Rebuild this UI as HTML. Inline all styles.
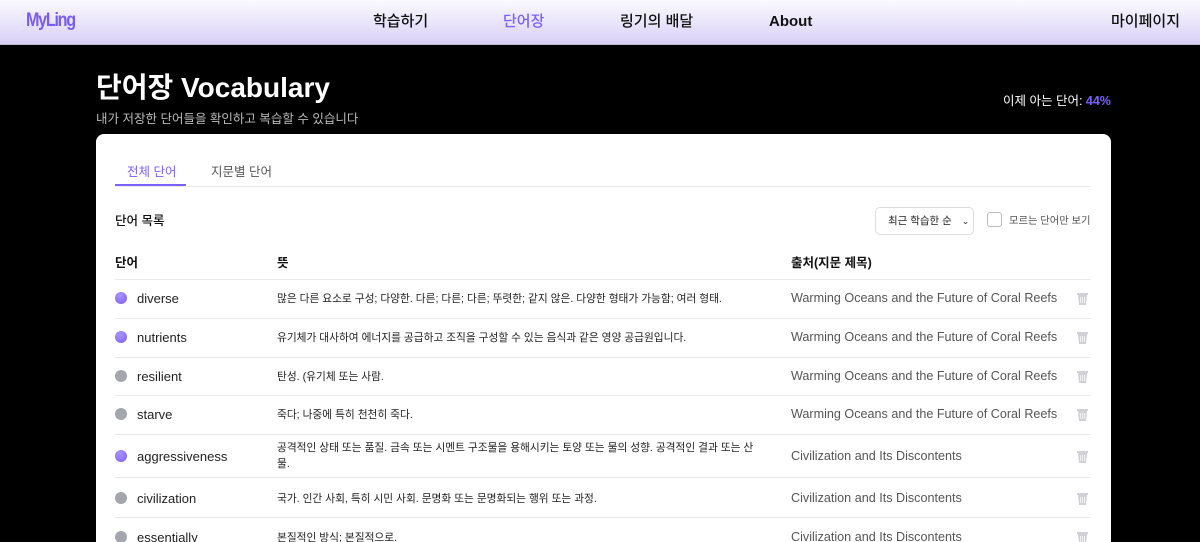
<!DOCTYPE html>
<html><head><meta charset="utf-8"><style>
*{margin:0;padding:0;box-sizing:border-box}
html,body{width:1200px;height:542px;overflow:hidden}
body{background:#000;font-family:"Liberation Sans","Noto Sans CJK KR",sans-serif;position:relative;line-height:1.2}
.nav{position:absolute;left:0;top:0;width:1200px;height:45px;background:linear-gradient(#fbfaff,#d9d1f6);border-bottom:1px solid #bdb8cc}
.nav span{position:absolute;top:13px;font-size:15px;line-height:18px;color:#111;font-weight:500}
.logo{position:absolute;left:26px;top:10px;font-size:19px;line-height:22px;color:#7a5cf0;font-weight:bold;letter-spacing:-1.5px;transform:scaleX(.85);transform-origin:left}
h1{position:absolute;left:96px;top:71px;color:#fff;font-size:28px;line-height:34px;font-weight:bold}
.sub{position:absolute;left:96px;top:112px;color:#bbb;font-size:12.5px}
.known{position:absolute;left:1003px;top:94px;color:#fff;font-size:12.5px}
.known b{color:#7b61ff}
.card{position:absolute;left:96px;top:134px;width:1015px;height:420px;background:#fff;border-radius:8px}
.abs{position:absolute}
.line{position:absolute;left:115px;width:976px;height:1px;background:#ebebeb}
.dot{position:absolute;left:115px;width:12px;height:12px;border-radius:50%}
.p{background:radial-gradient(circle at 40% 30%,#a995ff,#7c5cf0)}
.g{background:#a3a6ad}
.w{position:absolute;left:137px;font-size:13px;color:#222}
.m{position:absolute;left:277px;font-size:10.7px;color:#222;width:478px;line-height:16px}
.s{position:absolute;left:791px;font-size:12.6px;color:#555}
.t{position:absolute;left:1076px;width:13px;height:13px}
</style></head><body>
<div class="nav">
<div class="logo">MyLing</div>
<span style="left:373px">학습하기</span>
<span style="left:503px;color:#7b61ff">단어장</span>
<span style="left:620px">링기의 배달</span>
<span style="left:769px;font-weight:bold">About</span>
<span style="left:1111px">마이페이지</span>
</div>
<h1>단어장 Vocabulary</h1>
<div class="sub">내가 저장한 단어들을 확인하고 복습할 수 있습니다</div>
<div class="known">이제 아는 단어: <b>44%</b></div>
<div class="card"></div>
<div class="abs" style="left:127px;top:165px;font-size:12.5px;color:#7b61ff">전체 단어</div>
<div class="abs" style="left:211px;top:165px;font-size:12.5px;color:#555">지문별 단어</div>
<div class="abs" style="left:115px;top:184px;width:71px;height:2px;background:#7b61ff"></div>
<div class="line" style="top:186px"></div>
<div class="abs" style="left:115px;top:214px;font-size:12.5px;color:#111;font-weight:500">단어 목록</div>
<div class="abs" style="left:875px;top:207px;width:99px;height:28px;border:1px solid #ddd;border-radius:5px;font-size:10.5px;color:#222;display:flex;align-items:center;padding-left:12px;white-space:nowrap">최근 학습한 순<span style="margin-left:10px;font-size:9px">&#8964;</span></div>
<div class="abs" style="left:987px;top:212px;width:15px;height:15px;border:1px solid #bbb;border-radius:3px"></div>
<div class="abs" style="left:1009px;top:214px;font-size:10.3px;line-height:12px;color:#555;white-space:nowrap;transform:translateY(2px)">모르는 단어만 보기</div>
<div class="abs" style="left:115px;top:256px;font-size:12.5px;color:#111;font-weight:bold">단어</div>
<div class="abs" style="left:277px;top:256px;font-size:12.5px;color:#111;font-weight:bold">뜻</div>
<div class="abs" style="left:791px;top:256px;font-size:12.5px;color:#111;font-weight:bold">출처(지문 제목)</div>
<div class="line" style="top:279px"></div>

<div class="dot p" style="top:292px"></div><div class="w" style="top:291px">diverse</div><div class="m" style="top:291px">많은 다른 요소로 구성; 다양한. 다른; 다른; 다른; 뚜렷한; 같지 않은. 다양한 형태가 가능함; 여러 형태.</div><div class="s" style="top:291px">Warming Oceans and the Future of Coral Reefs</div>
<svg class="t" style="top:292px" viewBox="0 0 13 13"><path d="M1 1h11v2H1zM2 3h9l-1 10H3z" fill="#d0d0d6"/><path d="M4.5 5v6M6.5 5v6M8.5 5v6" stroke="#fff" stroke-width=".7"/></svg>
<div class="line" style="top:318px"></div>

<div class="dot p" style="top:331px"></div><div class="w" style="top:330px">nutrients</div><div class="m" style="top:330px">유기체가 대사하여 에너지를 공급하고 조직을 구성할 수 있는 음식과 같은 영양 공급원입니다.</div><div class="s" style="top:330px">Warming Oceans and the Future of Coral Reefs</div>
<svg class="t" style="top:331px" viewBox="0 0 13 13"><path d="M1 1h11v2H1zM2 3h9l-1 10H3z" fill="#d0d0d6"/><path d="M4.5 5v6M6.5 5v6M8.5 5v6" stroke="#fff" stroke-width=".7"/></svg>
<div class="line" style="top:357px"></div>

<div class="dot g" style="top:370px"></div><div class="w" style="top:369px">resilient</div><div class="m" style="top:369px">탄성. (유기체 또는 사람.</div><div class="s" style="top:369px">Warming Oceans and the Future of Coral Reefs</div>
<svg class="t" style="top:370px" viewBox="0 0 13 13"><path d="M1 1h11v2H1zM2 3h9l-1 10H3z" fill="#d0d0d6"/><path d="M4.5 5v6M6.5 5v6M8.5 5v6" stroke="#fff" stroke-width=".7"/></svg>
<div class="line" style="top:395px"></div>

<div class="dot g" style="top:408px"></div><div class="w" style="top:407px">starve</div><div class="m" style="top:407px">죽다; 나중에 특히 천천히 죽다.</div><div class="s" style="top:407px">Warming Oceans and the Future of Coral Reefs</div>
<svg class="t" style="top:408px" viewBox="0 0 13 13"><path d="M1 1h11v2H1zM2 3h9l-1 10H3z" fill="#d0d0d6"/><path d="M4.5 5v6M6.5 5v6M8.5 5v6" stroke="#fff" stroke-width=".7"/></svg>
<div class="line" style="top:434px"></div>

<div class="dot p" style="top:450px"></div><div class="w" style="top:449px">aggressiveness</div><div class="m" style="top:440px">공격적인 상태 또는 품질. 금속 또는 시멘트 구조물을 용해시키는 토양 또는 물의 성향. 공격적인 결과 또는 산<br>물.</div><div class="s" style="top:449px">Civilization and Its Discontents</div>
<svg class="t" style="top:450px" viewBox="0 0 13 13"><path d="M1 1h11v2H1zM2 3h9l-1 10H3z" fill="#d0d0d6"/><path d="M4.5 5v6M6.5 5v6M8.5 5v6" stroke="#fff" stroke-width=".7"/></svg>
<div class="line" style="top:477px"></div>

<div class="dot g" style="top:492px"></div><div class="w" style="top:491px">civilization</div><div class="m" style="top:491px">국가. 인간 사회, 특히 시민 사회. 문명화 또는 문명화되는 행위 또는 과정.</div><div class="s" style="top:491px">Civilization and Its Discontents</div>
<svg class="t" style="top:492px" viewBox="0 0 13 13"><path d="M1 1h11v2H1zM2 3h9l-1 10H3z" fill="#d0d0d6"/><path d="M4.5 5v6M6.5 5v6M8.5 5v6" stroke="#fff" stroke-width=".7"/></svg>
<div class="line" style="top:517px"></div>

<div class="dot g" style="top:531px"></div><div class="w" style="top:530px">essentially</div><div class="m" style="top:530px">본질적인 방식; 본질적으로.</div><div class="s" style="top:530px">Civilization and Its Discontents</div>
<svg class="t" style="top:531px" viewBox="0 0 13 13"><path d="M1 1h11v2H1zM2 3h9l-1 10H3z" fill="#d0d0d6"/><path d="M4.5 5v6M6.5 5v6M8.5 5v6" stroke="#fff" stroke-width=".7"/></svg>
</body></html>
